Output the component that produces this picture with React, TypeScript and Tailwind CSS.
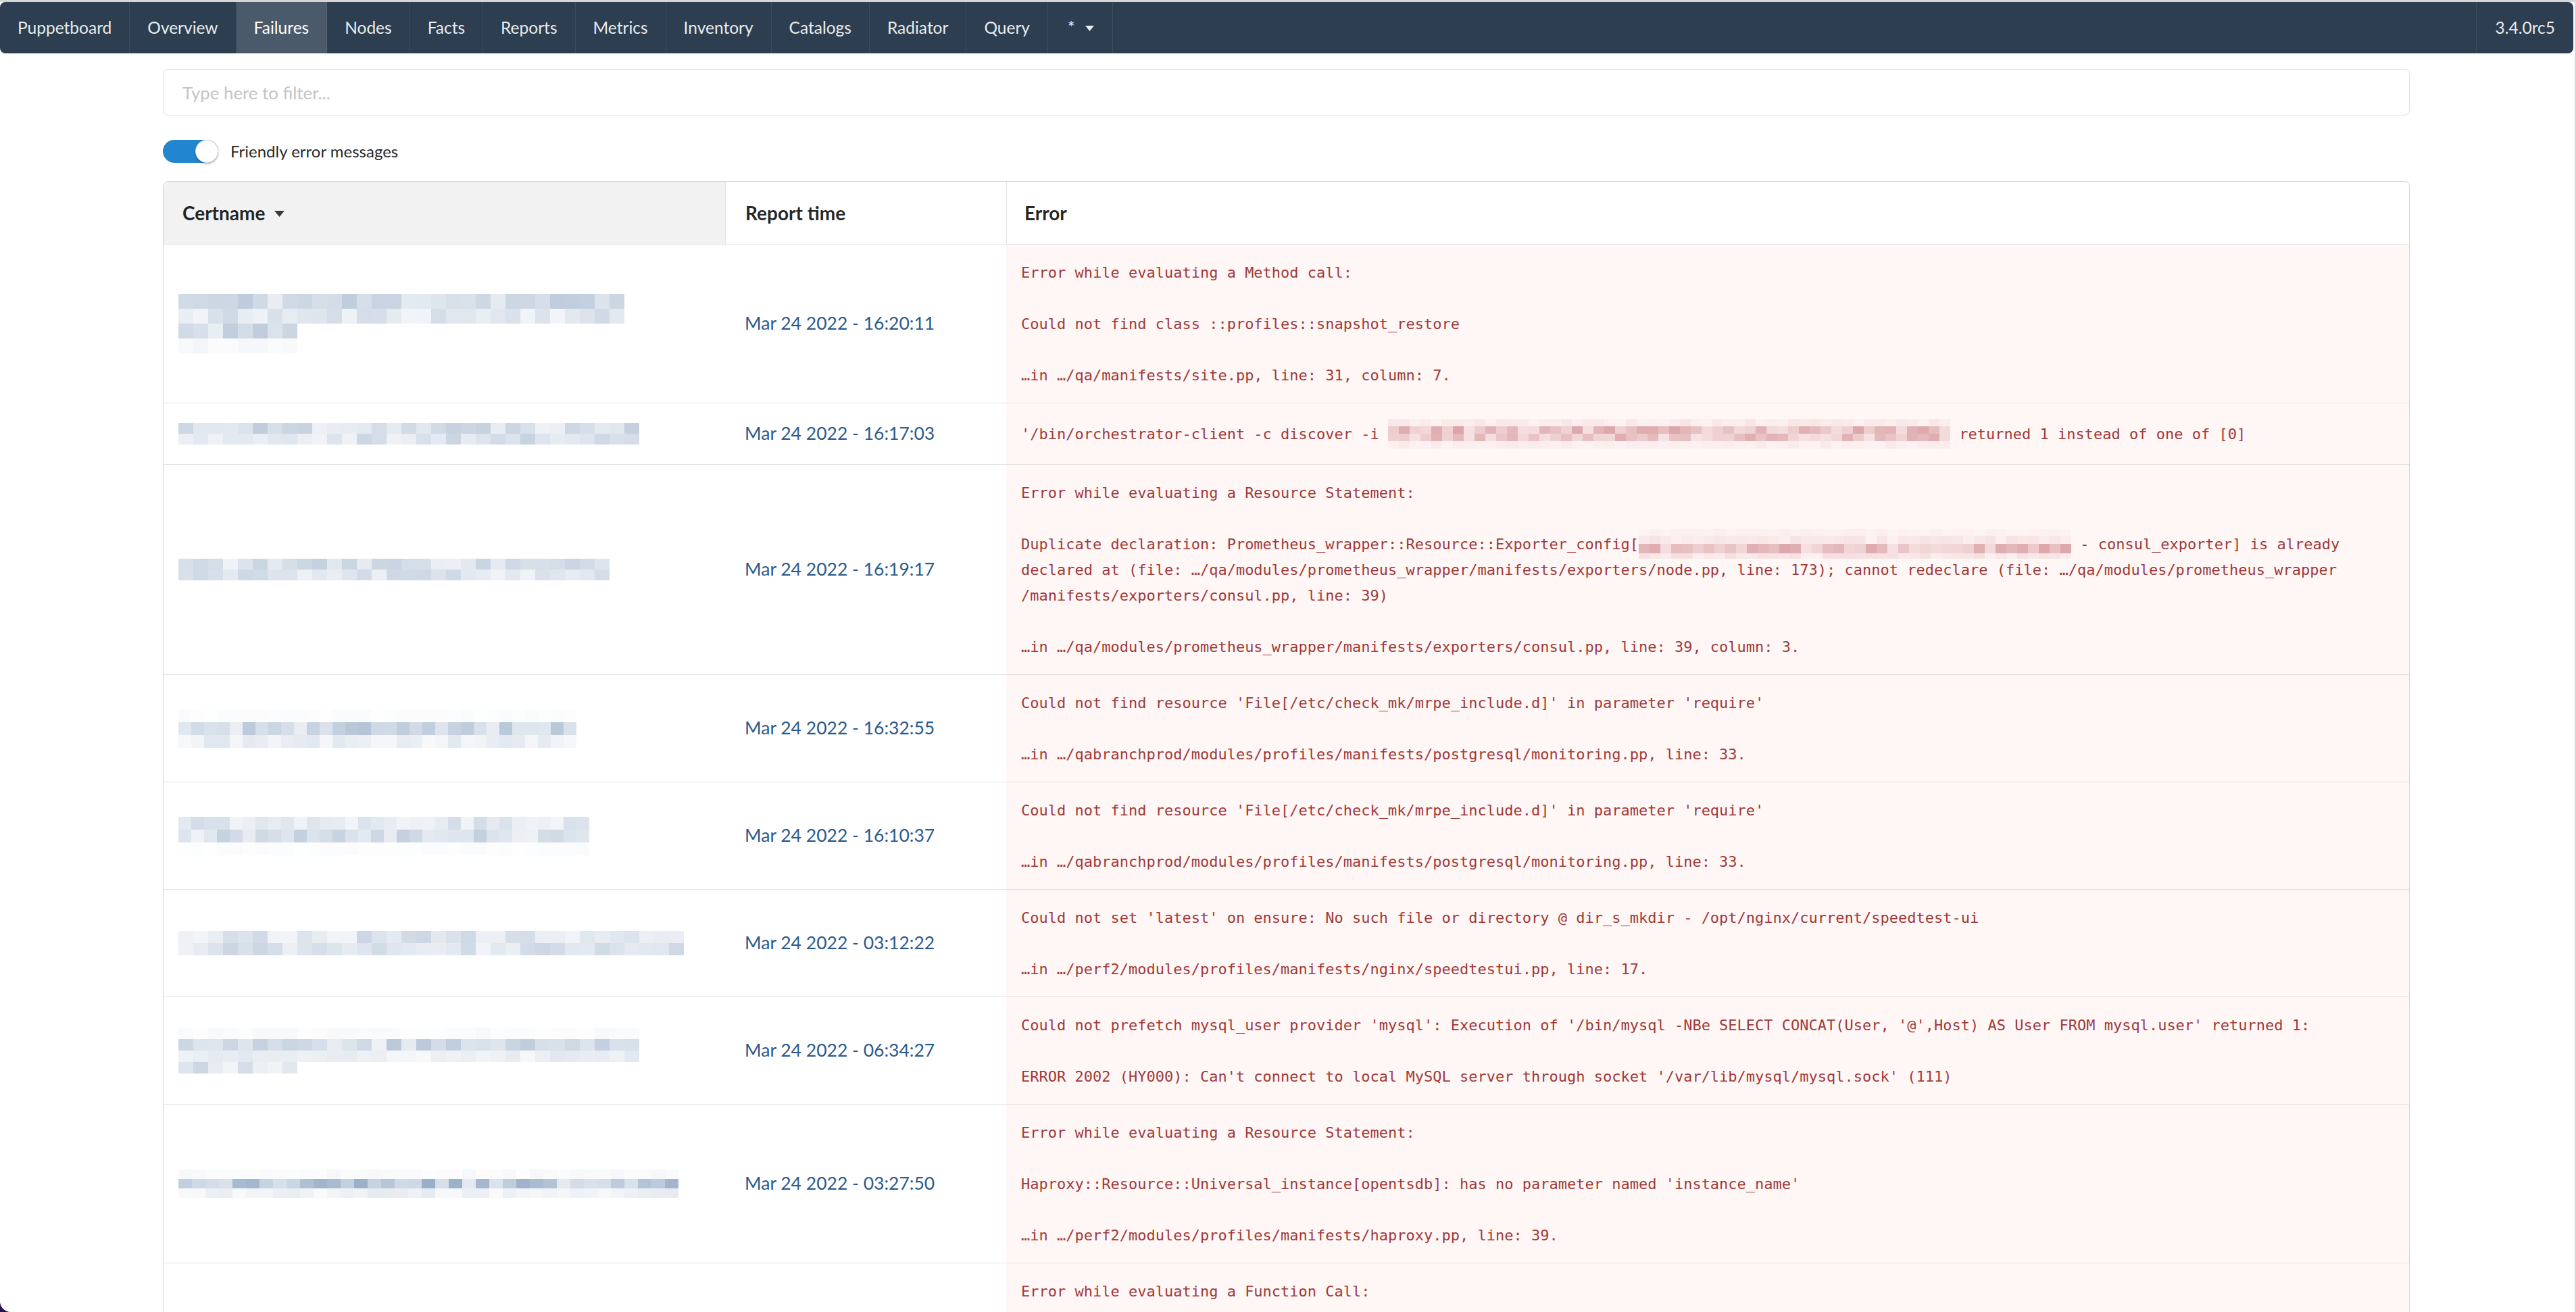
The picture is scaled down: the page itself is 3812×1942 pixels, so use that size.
import React from "react";

function rng(seed: number) {
  let s = seed;
  return () => {
    s |= 0;
    s = (s + 0x6d2b79f5) | 0;
    let t = Math.imul(s ^ (s >>> 15), 1 | s);
    t = (t + Math.imul(t ^ (t >>> 7), 61 | t)) ^ t;
    return ((t ^ (t >>> 14)) >>> 0) / 4294967296;
  };
}

type Band = { n: number; h: number; k: number };

function mix(a: number[], b: number[], t: number) {
  const c = a.map((v, i) => Math.round(v + (b[i] - v) * t));
  return `rgb(${c[0]},${c[1]},${c[2]})`;
}

function Blur({
  seed,
  bw,
  bands,
  base,
  bg,
}: {
  seed: number;
  bw: number;
  bands: Band[];
  base: number[];
  bg: number[];
}) {
  const r = rng(seed);
  const rects: React.ReactNode[] = [];
  let y = 0;
  const width = Math.max(...bands.map((b) => b.n)) * bw;
  bands.forEach((b, i) => {
    for (let j = 0; j < b.n; j++) {
      const t = Math.min(1, b.k * (0.3 + 0.9 * r()));
      rects.push(
        <rect key={`${i}-${j}`} x={j * bw} y={y} width={bw} height={b.h} fill={mix(bg, base, t)} />
      );
    }
    y += b.h;
  });
  return (
    <svg width={width} height={y} className="block shrink-0">
      {rects}
    </svg>
  );
}

const BLUE = [112, 142, 178];
const WHITE = [255, 255, 255];
const PINK = [196, 110, 116];
const PINKBG = [255, 246, 246];

type Seg = string | { blur: { seed: number; bw: number; bands: Band[] } };
type Line = Seg[];

type Row = {
  cert: { seed: number; bw: number; bands: Band[] } | null;
  date: string;
  lines: Line[];
  lineH?: string;
};

const rows: Row[] = [
  {
    cert: {
      seed: 11,
      bw: 22,
      bands: [
        { n: 30, h: 22, k: 0.42 },
        { n: 30, h: 22, k: 0.28 },
        { n: 8, h: 22, k: 0.45 },
        { n: 8, h: 22, k: 0.08 },
      ],
    },
    date: "Mar 24 2022 - 16:20:11",
    lines: [
      ["Error while evaluating a Method call:"],
      [""],
      ["Could not find class ::profiles::snapshot_restore"],
      [""],
      ["…in …/qa/manifests/site.pp, line: 31, column: 7."],
    ],
  },
  {
    cert: {
      seed: 22,
      bw: 22,
      bands: [
        { n: 31, h: 16, k: 0.4 },
        { n: 31, h: 16, k: 0.35 },
      ],
    },
    date: "Mar 24 2022 - 16:17:03",
    lineH: "h-[46px]",
    lines: [
      [
        "'/bin/orchestrator-client -c discover -i ",
        {
          blur: {
            seed: 5,
            bw: 16,
            bands: [
              { n: 52, h: 11, k: 0.1 },
              { n: 52, h: 11, k: 0.5 },
              { n: 52, h: 11, k: 0.45 },
              { n: 52, h: 11, k: 0.08 },
            ],
          },
        },
        " returned 1 instead of one of [0]",
      ],
    ],
  },
  {
    cert: {
      seed: 33,
      bw: 22,
      bands: [
        { n: 29, h: 16, k: 0.35 },
        { n: 29, h: 16, k: 0.3 },
      ],
    },
    date: "Mar 24 2022 - 16:19:17",
    lines: [
      ["Error while evaluating a Resource Statement:"],
      [""],
      [
        "Duplicate declaration: Prometheus_wrapper::Resource::Exporter_config[",
        {
          blur: {
            seed: 9,
            bw: 16,
            bands: [
              { n: 40, h: 10, k: 0.05 },
              { n: 40, h: 12, k: 0.12 },
              { n: 40, h: 14, k: 0.5 },
              { n: 40, h: 8, k: 0.15 },
            ],
          },
        },
        " - consul_exporter] is already",
      ],
      [
        "declared at (file: …/qa/modules/prometheus_wrapper/manifests/exporters/node.pp, line: 173); cannot redeclare (file: …/qa/modules/prometheus_wrapper",
      ],
      ["/manifests/exporters/consul.pp, line: 39)"],
      [""],
      ["…in …/qa/modules/prometheus_wrapper/manifests/exporters/consul.pp, line: 39, column: 3."],
    ],
  },
  {
    cert: {
      seed: 44,
      bw: 19,
      bands: [
        { n: 31, h: 19, k: 0.03 },
        { n: 31, h: 19, k: 0.45 },
        { n: 31, h: 19, k: 0.18 },
      ],
    },
    date: "Mar 24 2022 - 16:32:55",
    lines: [
      ["Could not find resource 'File[/etc/check_mk/mrpe_include.d]' in parameter 'require'"],
      [""],
      ["…in …/qabranchprod/modules/profiles/manifests/postgresql/monitoring.pp, line: 33."],
    ],
  },
  {
    cert: {
      seed: 55,
      bw: 19,
      bands: [
        { n: 32, h: 19, k: 0.28 },
        { n: 32, h: 19, k: 0.35 },
        { n: 32, h: 19, k: 0.03 },
      ],
    },
    date: "Mar 24 2022 - 16:10:37",
    lines: [
      ["Could not find resource 'File[/etc/check_mk/mrpe_include.d]' in parameter 'require'"],
      [""],
      ["…in …/qabranchprod/modules/profiles/manifests/postgresql/monitoring.pp, line: 33."],
    ],
  },
  {
    cert: {
      seed: 66,
      bw: 22,
      bands: [
        { n: 34, h: 18, k: 0.3 },
        { n: 34, h: 18, k: 0.3 },
      ],
    },
    date: "Mar 24 2022 - 03:12:22",
    lines: [
      ["Could not set 'latest' on ensure: No such file or directory @ dir_s_mkdir - /opt/nginx/current/speedtest-ui"],
      [""],
      ["…in …/perf2/modules/profiles/manifests/nginx/speedtestui.pp, line: 17."],
    ],
  },
  {
    cert: {
      seed: 77,
      bw: 22,
      bands: [
        { n: 31, h: 17, k: 0.05 },
        { n: 31, h: 17, k: 0.42 },
        { n: 31, h: 17, k: 0.2 },
        { n: 8, h: 17, k: 0.3 },
      ],
    },
    date: "Mar 24 2022 - 06:34:27",
    lines: [
      [
        "Could not prefetch mysql_user provider 'mysql': Execution of '/bin/mysql -NBe SELECT CONCAT(User, '@',Host) AS User FROM mysql.user' returned 1:",
      ],
      [""],
      ["ERROR 2002 (HY000): Can't connect to local MySQL server through socket '/var/lib/mysql/mysql.sock' (111)"],
    ],
  },
  {
    cert: {
      seed: 88,
      bw: 20,
      bands: [
        { n: 37, h: 14, k: 0.06 },
        { n: 37, h: 14, k: 0.6 },
        { n: 37, h: 14, k: 0.15 },
      ],
    },
    date: "Mar 24 2022 - 03:27:50",
    lines: [
      ["Error while evaluating a Resource Statement:"],
      [""],
      ["Haproxy::Resource::Universal_instance[opentsdb]: has no parameter named 'instance_name'"],
      [""],
      ["…in …/perf2/modules/profiles/manifests/haproxy.pp, line: 39."],
    ],
  },
  {
    cert: null,
    date: "",
    lines: [["Error while evaluating a Function Call:"], [""], [""], [""], [""]],
  },
];

const navItems = [
  "Puppetboard",
  "Overview",
  "Failures",
  "Nodes",
  "Facts",
  "Reports",
  "Metrics",
  "Inventory",
  "Catalogs",
  "Radiator",
  "Query",
];

function Nav() {
  return (
    <nav className="mr-[2px] flex h-[76px] items-stretch rounded-[8px] bg-[#2c3e50] text-[24.5px] text-white/90">
      {navItems.map((it) => (
        <div
          key={it}
          className={`flex items-center border-r border-white/[0.08] px-[26px] ${
            it === "Failures" ? "bg-white/[0.15] text-white" : ""
          }`}
        >
          {it}
        </div>
      ))}
      <div className="flex items-center gap-[16px] border-r border-white/[0.08] pl-[29px] pr-[27px]">
        <span>*</span>
        <svg width="13" height="8" viewBox="0 0 13 8" className="mt-[2px]">
          <path d="M0 0 H13 L6.5 8 Z" fill="rgba(255,255,255,0.9)" />
        </svg>
      </div>
      <div className="flex-1" />
      <div className="flex items-center border-l border-white/[0.08] px-[27px]">3.4.0rc5</div>
    </nav>
  );
}

export default function App() {
  return (
    <div className="h-[1942px] w-[3812px] overflow-hidden bg-[#2a1150] font-[Lato,sans-serif]">
      <div className="h-full w-full overflow-hidden rounded-bl-[16px] bg-[#d6d6d6] pr-[2px] pt-[3px]">
        <div className="h-full w-full overflow-hidden rounded-bl-[16px] bg-white">
          <Nav />
          <main className="ml-[241px] w-[3325px] text-[26px] text-black/[0.87]">
            <input
              className="mt-[23px] block h-[69px] w-full rounded-[8px] border border-[#dedede] px-[28px] text-[25.8px] outline-none placeholder:text-[#c4c4c4]"
              placeholder="Type here to filter..."
            />
            <div className="mt-[36px] flex h-[34px] items-center gap-[18px]">
              <div className="flex h-[34px] w-[82px] justify-end rounded-full bg-[#2185d0]">
                <div className="h-[34px] w-[34px] rounded-full bg-white shadow-[0_2px_3px_rgba(0,0,0,0.25),inset_0_0_0_1px_rgba(34,36,38,0.15)]" />
              </div>
              <span className="text-[24px]">Friendly error messages</span>
            </div>
            <div className="mt-[27px] overflow-hidden rounded-t-[8px] border border-[#d4d4d5]">
              <div className="grid h-[92px] grid-cols-[831px_416px_1fr] text-[28px] font-bold">
                <div className="flex items-center gap-[14px] bg-[#f2f2f2] pl-[28px]">
                  <span>Certname</span>
                  <svg width="15" height="9" viewBox="0 0 15 9" className="mt-[3px]">
                    <path d="M0 0 H15 L7.5 9 Z" fill="#3a3a3a" />
                  </svg>
                </div>
                <div className="flex items-center border-l border-[#e4e4e4] pl-[29px]">Report time</div>
                <div className="flex items-center border-l border-[#e4e4e4] pl-[26px]">Error</div>
              </div>
              {rows.map((row, i) => (
                <div key={i} className="grid grid-cols-[831px_416px_1fr] border-t border-[#e3e3e3]">
                  <div className="flex items-center pl-[22px]">
                    {row.cert && <Blur {...row.cert} base={BLUE} bg={WHITE} />}
                  </div>
                  <div className="flex items-center pl-[29px] text-[26.5px] text-[#2b5a8c]">{row.date}</div>
                  <div className="bg-[#fff6f6] px-[22px] py-[22px] font-['DejaVu_Sans_Mono',monospace] text-[22px] text-[#9f3a38]">
                    {row.lines.map((ln, j) => (
                      <div key={j} className={`flex items-center whitespace-pre ${row.lineH ?? "h-[38px]"}`}>
                        {ln.map((seg, k) =>
                          typeof seg === "string" ? (
                            <span key={k}>{seg}</span>
                          ) : (
                            <Blur key={k} {...seg.blur} base={PINK} bg={PINKBG} />
                          )
                        )}
                      </div>
                    ))}
                  </div>
                </div>
              ))}
            </div>
          </main>
        </div>
      </div>
    </div>
  );
}
